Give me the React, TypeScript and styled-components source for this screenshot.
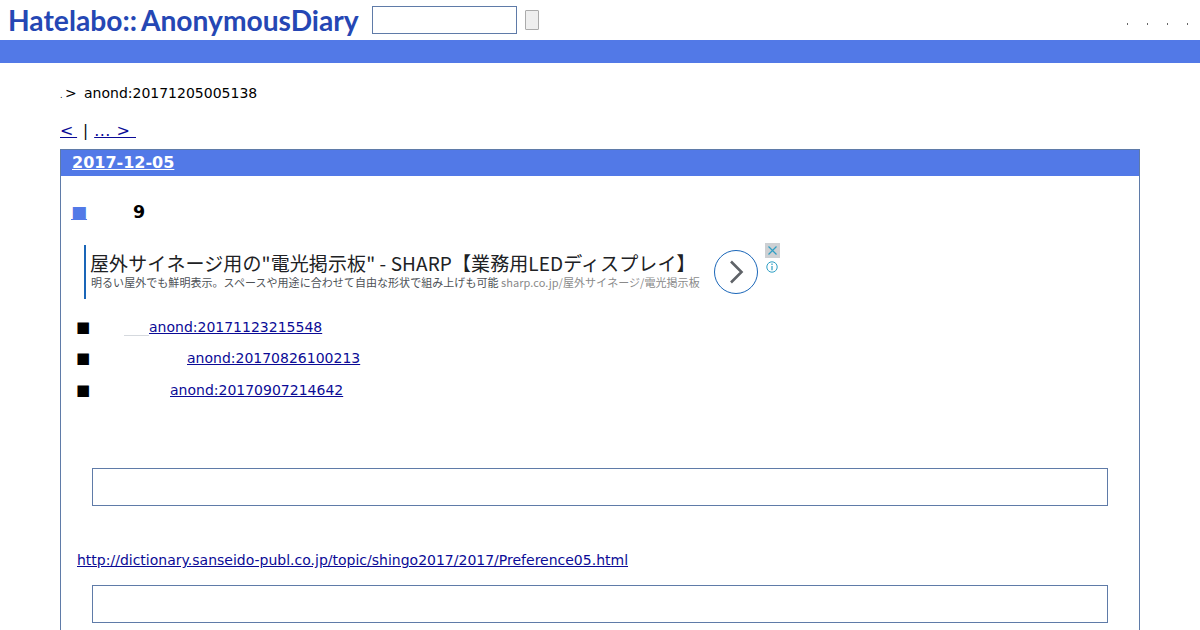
import { createGlobalStyle } from "styled-components";
import styled from "styled-components";

const GlobalStyle = createGlobalStyle`
    html, body {
        margin: 0;
        padding: 0;
        background: #fff;
        color: #000;
        font-family: "DejaVu Sans", sans-serif;
        font-size: 14px;
        overflow: hidden;
    }
    a { color: #0b0b96; }
`;

const relatedLinks = [
    { href: "anond:20171123215548", indent: 59, faint: true },
    { href: "anond:20170826100213", indent: 97, faint: false },
    { href: "anond:20170907214642", indent: 80, faint: false },
];

export default function App() {
    return (
        <>
            <GlobalStyle />
            <Header>
                <Logo>Hatelabo::<LogoRest>AnonymousDiary</LogoRest></Logo>
                <SearchInput />
                <SearchButton />
                <HeaderMenu>
                    <MenuDot /><MenuDot /><MenuDot /><MenuDot />
                </HeaderMenu>
            </Header>
            <BlueBar />
            <Main>
                <Breadcrumb>
                    <TinyDot>.</TinyDot>
                    <span>&gt;</span>
                    <span>anond:20171205005138</span>
                </Breadcrumb>
                <Pager>
                    <PrevLink href="#">&lt;&nbsp;</PrevLink>
                    <Sep>|</Sep>
                    <NextLink href="#">...&nbsp;&gt;&nbsp;</NextLink>
                </Pager>
                <Day>
                    <DayTitle><a href="#">2017-12-05</a></DayTitle>
                    <Section>
                        <EntryTitle>
                            <SectionMark href="#">■</SectionMark>
                            <span>9</span>
                        </EntryTitle>
                        <Ad>
                            <AdText>
                                <AdTitle>屋外サイネージ用の"電光掲示板" - SHARP【業務用LEDディスプレイ】</AdTitle>
                                <AdSub>
                                    明るい屋外でも鮮明表示。スペースや用途に合わせて自由な形状で組み上げも可能 <AdUrl>sharp.co.jp/屋外サイネージ/電光掲示板</AdUrl>
                                </AdSub>
                            </AdText>
                            <AdArrow>
                                <svg width="44" height="44" viewBox="0 0 44 44" fill="none">
                                    <circle cx="22" cy="22" r="21.5" stroke="#1a66b8" />
                                    <path d="M17 11.5 L27.5 22 L17 32.5" stroke="#5f6368" strokeWidth="2.6" />
                                </svg>
                            </AdArrow>
                            <AdClose>
                                <svg width="15" height="15" viewBox="0 0 15 15" fill="none">
                                    <rect width="15" height="15" fill="#cdd0d3" />
                                    <path d="M3.5 3.5 L11.5 11.5 M11.5 3.5 L3.5 11.5" stroke="#2f9fc4" strokeWidth="1.2" />
                                </svg>
                            </AdClose>
                            <AdInfo>
                                <svg width="12" height="12" viewBox="0 0 12 12" fill="none">
                                    <circle cx="6" cy="6" r="5.2" stroke="#2f9fc4" />
                                    <path d="M6 5 V9.2 M6 2.6 V3.9" stroke="#2f9fc4" strokeWidth="1.2" />
                                </svg>
                            </AdInfo>
                        </Ad>
                        <LinkList>
                            {relatedLinks.map((item) => (
                                <LinkRow key={item.href}>
                                    <Square>■</Square>
                                    <Gap $width={item.indent} $faint={item.faint} />
                                    <a href="#">{item.href}</a>
                                </LinkRow>
                            ))}
                        </LinkList>
                        <Quote />
                        <UrlLine>
                            <a href="#">http://dictionary.sanseido-publ.co.jp/topic/shingo2017/2017/Preference05.html</a>
                        </UrlLine>
                        <Quote $second />
                    </Section>
                </Day>
            </Main>
        </>
    );
}

const Header = styled.header`
    height: 40px;
    display: flex;
    align-items: center;
    padding-left: 8px;
`;

const Logo = styled.h1`
    margin: 0;
    width: 364px;
    font-family: Lato, sans-serif;
    font-size: 28.2px;
    font-weight: 700;
    line-height: 40px;
    color: #2547b4;
    white-space: nowrap;
`;

const LogoRest = styled.span`
    margin-left: 4px;
`;

const SearchInput = styled.input`
    width: 145px;
    height: 28px;
    box-sizing: border-box;
    border: 1px solid #5f7ba8;
    background: #fff;
    padding: 0;
`;

const SearchButton = styled.button`
    width: 14px;
    height: 20px;
    margin-left: 8px;
    padding: 0;
    background: #efefef;
    border: 1px solid #ababab;
    border-radius: 1px;
`;

const HeaderMenu = styled.nav`
    margin-left: auto;
    padding: 8px 12px 0 0;
    display: flex;
    gap: 19px;
`;

const MenuDot = styled.span`
    width: 1px;
    height: 2px;
    background: #666;
`;

const BlueBar = styled.div`
    height: 23px;
    background: #5279e7;
`;

const Main = styled.main`
    padding: 0 60px;
`;

const Breadcrumb = styled.div`
    display: flex;
    align-items: baseline;
    padding-top: 21px;
    height: 26px;
    line-height: 18px;
    font-size: 14px;

    span:nth-child(2) { margin-left: 3px; width: 19px; }
`;

const TinyDot = styled.span`
    font-size: 8px;
    width: 2px;
`;

const Pager = styled.div`
    margin-top: 12px;
    height: 19px;
    line-height: 18px;
    font-size: 16px;
    display: flex;
`;

const PrevLink = styled.a`
    letter-spacing: -0.7px;
`;

const NextLink = styled.a`
    letter-spacing: 0.5px;
`;

const Sep = styled.span`
    margin: 0 6px 0 6px;
    font-size: 15px;
`;

const Day = styled.article`
    margin-top: 8px;
    border: 1px solid #5f7ba8;
    border-bottom: none;
    height: 500px;
`;

const DayTitle = styled.h2`
    margin: 0;
    height: 26px;
    padding-left: 11px;
    background: #5279e7;
    font-size: 16px;
    line-height: 25px;
    font-weight: 700;

    a { color: #fff; }
`;

const Section = styled.section`
    padding: 0 31px 0 16px;
`;

const EntryTitle = styled.h3`
    margin: 0 0 0 -6px;
    padding-top: 26px;
    height: 20px;
    line-height: 20px;
    font-size: 17.5px;
    font-weight: 700;
    display: flex;
`;

const SectionMark = styled.a`
    width: 62px;
    font-weight: 400;
    font-size: 17px;

    &&, &&:visited { color: #5279e7; }
`;

const Ad = styled.aside`
    position: relative;
    margin: 23px 0 0 7px;
    width: 696px;
    height: 54px;
    display: flex;
`;

const AdText = styled.div`
    width: 630px;
    height: 54px;
    box-sizing: border-box;
    border-left: 2px solid #1a66b8;
    padding: 6px 0 0 4px;
    font-family: "Noto Sans CJK JP", "Noto Sans", sans-serif;
`;

const AdTitle = styled.div`
    font-size: 19px;
    line-height: 24px;
    letter-spacing: 0.1px;
    color: #202124;
    white-space: nowrap;
`;

const AdSub = styled.div`
    font-size: 11px;
    line-height: 14px;
    letter-spacing: 0.05px;
    color: #4d5156;
    padding-left: 1px;
    white-space: nowrap;
`;

const AdUrl = styled.span`
    color: #8a8a8a;
`;

const AdArrow = styled.div`
    width: 44px;
    height: 44px;
    margin-top: 5px;
`;

const AdClose = styled.div`
    position: absolute;
    top: -2px;
    right: 0;
    line-height: 0;
`;

const AdInfo = styled.div`
    position: absolute;
    top: 16px;
    right: 2px;
    line-height: 0;
`;

const LinkList = styled.ul`
    list-style: none;
    margin: 17.6px 0 0;
    padding: 0;
`;

const LinkRow = styled.li`
    height: 31.5px;
    line-height: 20px;
    display: flex;
    font-size: 14px;
`;

const Square = styled.span`
    width: 14px;
    margin-left: -1px;
    font-size: 15px;
`;

const Gap = styled.span<{ $width: number; $faint: boolean }>`
    width: ${(p) => p.$width}px;
    height: 19px;
    background: ${(p) =>
        p.$faint
            ? "linear-gradient(#d5d9de, #d5d9de) right bottom / 25px 1px no-repeat"
            : "none"};
`;

const Quote = styled.blockquote<{ $second?: boolean }>`
    margin: ${(p) => (p.$second ? "15px" : "57.4px")} 0 0 15px;
    height: 38px;
    box-sizing: border-box;
    width: 1016px;
    border: 1px solid #5f7ba8;
`;

const UrlLine = styled.p`
    margin: 44px 0 0;
    line-height: 20px;
    height: 20px;
    font-size: 14px;
`;
